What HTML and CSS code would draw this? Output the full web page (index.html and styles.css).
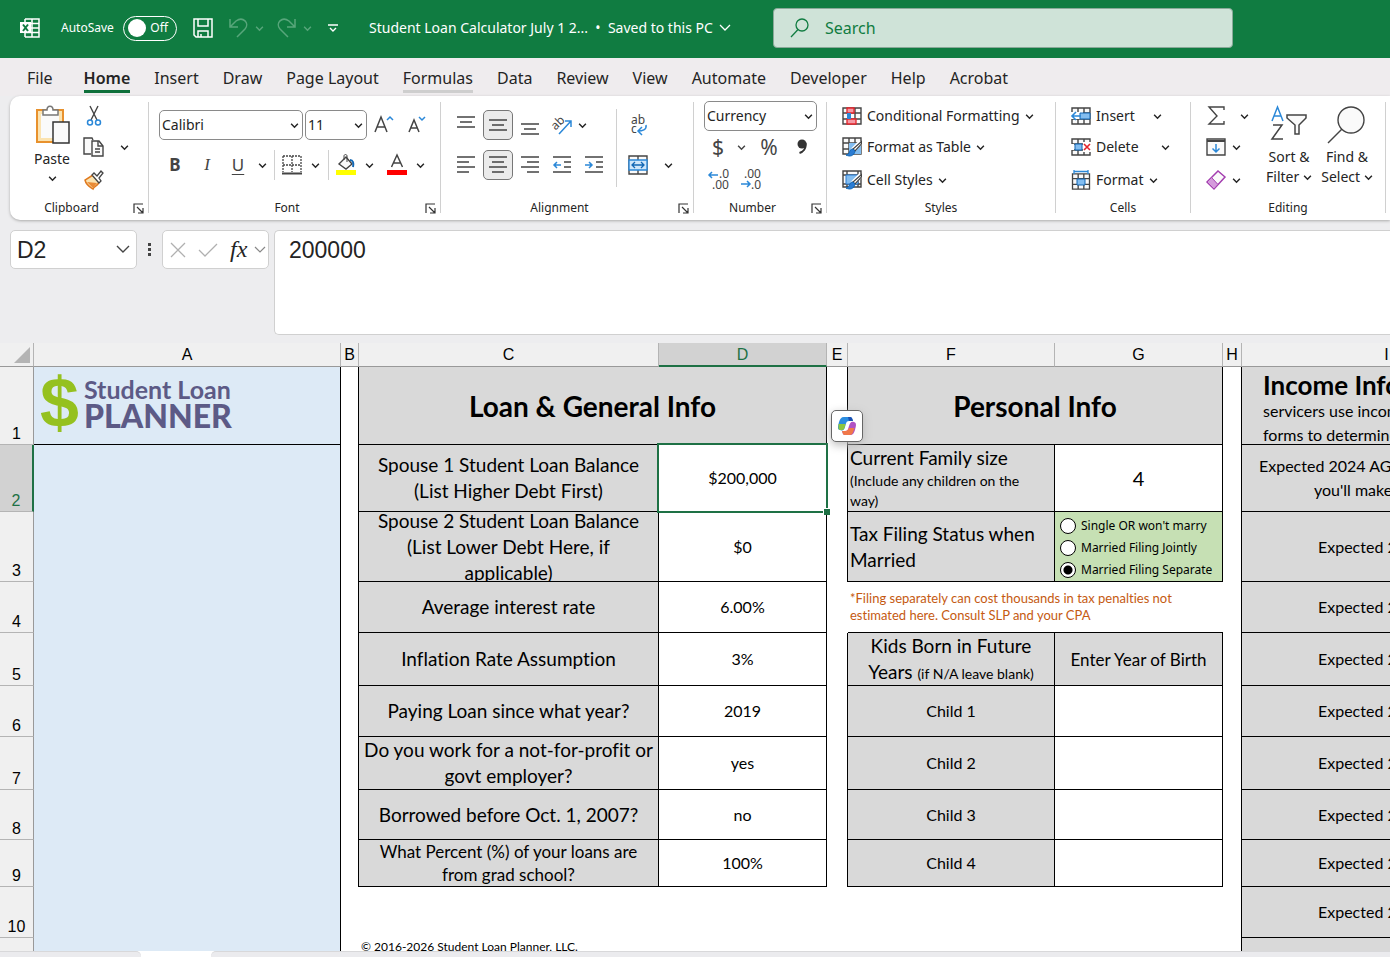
FILE: index.html
```html
<!DOCTYPE html>
<html lang="en">
<head>
<meta charset="utf-8">
<title>Student Loan Calculator - Excel</title>
<link rel="stylesheet" href="styles.css">
</head>
<body>
<svg class="sprite" aria-hidden="true">
  <symbol id="chev" viewBox="0 0 8 8"><path d="M1 2.5l3 3 3-3" fill="none" stroke="currentColor" stroke-width="1.3"/></symbol>
  <symbol id="launch" viewBox="0 0 11 11"><path d="M1 10V1h9M4 4l5.5 5.5M10 5v5H5" fill="none" stroke="#333" stroke-width="1.2"/></symbol>
  <symbol id="table" viewBox="0 0 20 18"><path d="M1 1h18v16H1zM1 6h18M1 12h18M7 1v16M13 1v16" fill="#fafafa" stroke="#444" stroke-width="1.4"/></symbol>
  <symbol id="brush" viewBox="0 0 20 20"><path d="M19 5L10 14" stroke="#fff" stroke-width="5"/><path d="M19.500 4.500L11 12l2 2 6.500-7z" fill="#fff" stroke="#444" stroke-width="1.200"/><path d="M11 12c-3 0-3 2-4 4-1 1.500-2 2-3 2 4 2 8 1 9-4z" fill="#2b7cd3" stroke="#1267b4"/></symbol>
</svg>

<header class="titlebar">
  <svg class="excel" width="20" height="20" viewBox="0 0 20 20"><path d="M5 1h14v18H5M5 5.500h14M5 10h14M5 14.500h14M12 1v18M5 1v18" fill="none" stroke="#fff" stroke-width="1.500"/><path d="M0 4h11v11H0z" fill="#fff"/><path d="M3 6.500l5 6.500M8 6.500L3 13" stroke="#107c41" stroke-width="2"/></svg>
  <label class="autosave">AutoSave <span class="switch"><input type="checkbox" aria-label="AutoSave"><span>Off</span></span></label>
  <button class="save" aria-label="Save"><svg width="20" height="20" viewBox="0 0 20 20" fill="none" stroke="#fff" stroke-width="1.500"><path d="M1 1h18v18H3l-2-2zM5 1v7h10V1M5 19v-6h10v6M8 19v-3"/></svg></button>
  <button class="undo" aria-label="Undo"><svg width="20" height="22" viewBox="0 0 20 22" fill="none" stroke="currentColor" stroke-width="1.500"><path d="M2 2v8h8M2 10L8 4c7-5 14 2 9 8l-8 8"/></svg></button>
  <svg class="faint" width="9" height="9"><use href="#chev"/></svg>
  <button class="redo" aria-label="Redo"><svg width="20" height="22" viewBox="0 0 20 22" fill="none" stroke="currentColor" stroke-width="1.500"><path d="M18 2v8h-8M18 10l-6-6C5-1-2 6 3 12l8 8"/></svg></button>
  <svg class="faint" width="9" height="9"><use href="#chev"/></svg>
  <button class="custom" aria-label="Customize toolbar"><svg width="10" height="9" viewBox="0 0 10 9" fill="none" stroke="#fff" stroke-width="1.400"><path d="M0 1h10M2 4l3 3 3-3"/></svg></button>
  <button class="doc">Student Loan Calculator July 1 2... &nbsp;•&nbsp; Saved to this PC <svg width="12" height="8" viewBox="0 0 12 8"><path d="M1 1l5 5 5-5" fill="none" stroke="#fff" stroke-width="1.300"/></svg></button>
  <label class="search"><svg width="20" height="20" viewBox="0 0 20 20" fill="none" stroke="#107c41" stroke-width="1.300"><circle cx="12" cy="7" r="6"/><path d="M8 11.500L1 19"/></svg><input type="text" placeholder="Search" aria-label="Search"></label>
</header>

<nav class="tabs">
  <button class="file">File</button><button class="current">Home</button><button>Insert</button><button>Draw</button><button>Page Layout</button><button class="hover">Formulas</button><button>Data</button><button>Review</button><button>View</button><button>Automate</button><button>Developer</button><button>Help</button><button>Acrobat</button>
</nav>

<section class="ribbon">
  <div class="group clipboard">
    <div class="body">
      <button class="paste"><svg width="36" height="40" viewBox="0 0 36 40"><path d="M3 5h26v32H3z" fill="#fbe3b0" stroke="#e8912d" stroke-width="2"/><path d="M7 9h18v24H7z" fill="#fafafa"/><path d="M9 10V5h4c0-5 6-5 6 0h5v5z" fill="#fff" stroke="#777" stroke-width="1.500"/><path d="M19 17h16v21H19z" fill="#fafafa" stroke="#333" stroke-width="1.500"/></svg><span>Paste</span><svg width="9" height="9"><use href="#chev"/></svg></button>
      <div class="stack">
        <div class="row"><button aria-label="Cut"><svg width="16" height="20" viewBox="0 0 16 20" fill="none"><path d="M4 0l7 14M12 0L5 14" stroke="#444" stroke-width="1.400"/><circle cx="4" cy="16.500" r="2.500" stroke="#2b88d8" stroke-width="1.500"/><circle cx="12" cy="16.500" r="2.500" stroke="#2b88d8" stroke-width="1.500"/></svg></button></div>
        <div class="row"><button aria-label="Copy"><svg width="22" height="20" viewBox="0 0 22 20" fill="#fafafa" stroke="#444" stroke-width="1.400"><path d="M8 17H1V1h8l1 2"/><path d="M9 4h7l4 5v10H9z"/><path d="M15 4v5h5M12 12h5M12 15h5" fill="none"/></svg></button><svg class="gap14" width="9" height="9"><use href="#chev"/></svg></div>
        <div class="row"><button aria-label="Format Painter"><svg width="20" height="20" viewBox="0 0 20 20"><path d="M9 5L1 10c1 5 5 7 8 9 1-3 5-3 6-7z" fill="#fbe3b0" stroke="#e07a1f" stroke-width="1.500"/><path d="M3 12l10 1-4 5z" fill="#e98a35"/><path d="M8 5l2-2 3 3 4-5 2 2-4 5 2 3-2 2z" fill="#fff" stroke="#444" stroke-width="1.300"/></svg></button></div>
      </div>
    </div>
    <div class="caption"><span>Clipboard</span><button aria-label="Clipboard options"><svg width="11" height="11"><use href="#launch"/></svg></button></div>
  </div>
  <i class="divider"></i>

  <div class="group font">
    <div class="body two">
      <div class="row combos"><span class="combo wide"><select aria-label="Font"><option>Calibri</option></select><svg width="9" height="9"><use href="#chev"/></svg></span><span class="combo narrow"><select aria-label="Font size"><option>11</option></select><svg width="9" height="9"><use href="#chev"/></svg></span>
        <button class="b34" aria-label="Increase font size"><svg width="20" height="20" viewBox="0 0 20 20" fill="none"><path d="M1 17L7 2l6 15M3 12h8" stroke="#444" stroke-width="1.500"/><path d="M13 5l3-3 3 3" stroke="#2b88d8" stroke-width="1.500"/></svg></button>
        <button class="b32" aria-label="Decrease font size"><svg width="20" height="20" viewBox="0 0 20 20" fill="none"><path d="M2 17L7 5l5 12M4 13h6" stroke="#444" stroke-width="1.500"/><path d="M12 2l3 3 3-3" stroke="#2b88d8" stroke-width="1.500"/></svg></button></div>
      <div class="row biu"><button class="b32"><b>B</b></button><button class="b32"><em>I</em></button><button class="b30"><u>U</u></button><svg class="c16" width="9" height="9"><use href="#chev"/></svg><i class="sep"></i>
        <button class="b34" aria-label="Borders"><svg width="20" height="20" viewBox="0 0 20 20" fill="none" stroke="#444"><path d="M1 1h18M1 10h18M1 1v16M10 1v16M19 1v16" stroke-dasharray="2 1" stroke-width="1.300"/><path d="M0 18.500h20" stroke-width="2"/></svg></button><svg class="c12" width="9" height="9"><use href="#chev"/></svg><i class="sep"></i>
        <button class="b34" aria-label="Fill colour"><svg width="20" height="22" viewBox="0 0 20 22"><path d="M3 10l7-7 6 7-6 5z" fill="#fafafa" stroke="#444" stroke-width="1.400"/><path d="M8 6V2c0-2 3-2 3 0v6" fill="none" stroke="#444"/><path d="M14 6c3 0 4 3 3 7" fill="none" stroke="#1267b4" stroke-width="2"/><path d="M0 16h20v5H0z" fill="#ff0"/></svg></button><svg class="c12" width="9" height="9"><use href="#chev"/></svg>
        <button class="b30" aria-label="Font colour"><svg width="20" height="22" viewBox="0 0 20 22"><path d="M4.500 13L10 1l5.500 12M6.500 9h7" fill="none" stroke="#444" stroke-width="1.500"/><path d="M0 16h20v5H0z" fill="red"/></svg></button><svg class="gap4" width="9" height="9"><use href="#chev"/></svg></div>
    </div>
    <div class="caption"><span>Font</span><button aria-label="Font options"><svg width="11" height="11"><use href="#launch"/></svg></button></div>
  </div>
  <i class="divider"></i>

  <div class="group align">
    <div class="body">
      <div class="two">
        <div class="row"><button class="sq" aria-label="Top align"><svg width="18" height="18"><path d="M0 1h18M3 6h12M0 11h18"/></svg></button><button class="sq on" aria-label="Middle align"><svg width="18" height="18"><path d="M0 4h18M3 9h12M0 14h18"/></svg></button><button class="sq" aria-label="Bottom align"><svg width="18" height="18"><path d="M0 8h18M3 13h12M0 18h18"/></svg></button>
          <button class="sq" aria-label="Orientation"><svg class="plain" width="20" height="20" viewBox="0 0 20 20"><text x="2" y="14" transform="rotate(-45 5 13)" class="tiny">ab</text><path d="M7 19L19 6M13 6h6v6" fill="none"/></svg></button><svg width="9" height="9"><use href="#chev"/></svg></div>
        <div class="row"><button class="sq" aria-label="Align left"><svg width="18" height="18"><path d="M0 1h18M0 6h12M0 11h18M0 16h12"/></svg></button><button class="sq on" aria-label="Centre"><svg width="18" height="18"><path d="M0 1h18M3 6h12M0 11h18M3 16h12"/></svg></button><button class="sq" aria-label="Align right"><svg width="18" height="18"><path d="M0 1h18M6 6h12M0 11h18M6 16h12"/></svg></button>
          <button class="sq" aria-label="Decrease indent"><svg width="18" height="18"><path d="M0 1h18M11 6h7M11 11h7M0 16h18"/><path class="blue" d="M8 9H1M4 6L1 9l3 3"/></svg></button><button class="sq" aria-label="Increase indent"><svg width="18" height="18"><path d="M0 1h18M11 6h7M11 11h7M0 16h18"/><path class="blue" d="M0 9h7M4 6l3 3-3 3"/></svg></button></div>
      </div>
      <i class="tallsep"></i>
      <div class="two merge">
        <div class="row"><button aria-label="Wrap text"><svg width="20" height="22" viewBox="0 0 20 22"><text x="3" y="10" class="tiny">ab</text><text x="3" y="19" class="tiny">c</text><path d="M18 11c1 5-4 6-8 6M14 13l-4 4 4 4" fill="none" stroke="#2b88d8" stroke-width="1.500"/></svg></button></div>
        <div class="row"><button aria-label="Merge and centre"><svg width="20" height="20" viewBox="0 0 20 20"><path d="M1 1h18v18H1zM10 1v18" fill="#fafafa" stroke="#444" stroke-width="1.400"/><path d="M1 5h18v10H1z" fill="#cfe6fa" stroke="#2b88d8" stroke-width="1.400"/><path d="M4 10h12M7 7l-3 3 3 3M13 7l3 3-3 3" fill="none" stroke="#1267b4" stroke-width="1.300"/></svg></button><svg class="gap16" width="9" height="9"><use href="#chev"/></svg></div>
      </div>
    </div>
    <div class="caption"><span>Alignment</span><button aria-label="Alignment options"><svg width="11" height="11"><use href="#launch"/></svg></button></div>
  </div>
  <i class="divider"></i>

  <div class="group number">
    <div class="body stack">
      <div class="row"><span class="combo format"><select aria-label="Number format"><option>Currency</option></select><svg width="9" height="9"><use href="#chev"/></svg></span></div>
      <div class="row big"><button class="b30">$</button><svg class="c18" width="9" height="9"><use href="#chev"/></svg><button class="b38">%</button><button class="b28" aria-label="Comma style"><svg width="10" height="16" viewBox="0 0 10 16"><circle cx="5" cy="5" r="4.500" fill="#333"/><path d="M8.500 4c1 6-3 9-6 10" fill="none" stroke="#333" stroke-width="2"/></svg></button></div>
      <div class="row"><button class="b32" aria-label="Increase decimal"><svg width="22" height="22" viewBox="0 0 22 22"><text x="11" y="9" class="digits">.0</text><text x="4" y="20" class="digits">.00</text><path d="M10 6H1M4 3L1 6l3 3" fill="none" stroke="#2b88d8" stroke-width="1.500"/></svg></button><button class="b32" aria-label="Decrease decimal"><svg width="22" height="22" viewBox="0 0 22 22"><text x="4" y="9" class="digits">.00</text><text x="11" y="20" class="digits">.0</text><path d="M1 15h9M7 12l3 3-3 3" fill="none" stroke="#2b88d8" stroke-width="1.500"/></svg></button></div>
    </div>
    <div class="caption"><span>Number</span><button aria-label="Number options"><svg width="11" height="11"><use href="#launch"/></svg></button></div>
  </div>
  <i class="divider"></i>

  <div class="group styles">
    <div class="body stack">
      <button class="row cmd"><svg width="20" height="18" viewBox="0 0 20 18"><use href="#table"/><path d="M5 1h7v5H5zM5 12h9v5H5z" fill="#f49aa5" stroke="#e3242b" stroke-width="1.300"/><path d="M5 6h4v6H5z" fill="#2b88d8"/></svg>Conditional Formatting<svg width="9" height="9"><use href="#chev"/></svg></button>
      <button class="row cmd"><svg width="20" height="20" viewBox="0 0 20 20"><use href="#table" width="20" height="18"/><path d="M7 6h12v11H7z" fill="#83bdf0"/><use href="#brush"/></svg>Format as Table<svg width="9" height="9"><use href="#chev"/></svg></button>
      <button class="row cmd"><svg width="20" height="20" viewBox="0 0 20 20"><path d="M1 1h18v16H1zM1 5h18M5 1v16M1 14h18M16 1v16" fill="#fafafa" stroke="#444" stroke-width="1.400"/><path d="M4 5h12v9H4z" fill="#83bdf0" stroke="#2b7cd3"/><use href="#brush"/></svg>Cell Styles<svg width="9" height="9"><use href="#chev"/></svg></button>
    </div>
    <div class="caption"><span>Styles</span></div>
  </div>
  <i class="divider"></i>

  <div class="group cells">
    <div class="body stack">
      <button class="row cmd"><svg width="20" height="18" viewBox="0 0 20 18"><use href="#table"/><path d="M0 5h12v7H0z" fill="#fff"/><path d="M9 6h10v6H9z" fill="#83bdf0" stroke="#1267b4"/><path d="M10 9H2M5 5L1 9l4 4" fill="none" stroke="#2b88d8" stroke-width="1.600"/></svg><span class="w52">Insert</span><svg width="9" height="9"><use href="#chev"/></svg></button>
      <button class="row cmd"><svg width="20" height="18" viewBox="0 0 20 18"><use href="#table"/><path d="M12 4h8v10h-8zM0 6h3v6H0z" fill="#fff"/><path d="M4 6h7v6H4z" fill="#83bdf0" stroke="#1267b4"/><path d="M13 6l6 6M19 6l-6 6" stroke="#e3242b" stroke-width="1.600"/></svg><span class="w60">Delete</span><svg width="9" height="9"><use href="#chev"/></svg></button>
      <button class="row cmd"><svg width="20" height="20" viewBox="0 0 20 20"><use href="#table" y="3" width="20" height="17"/><path d="M3 0h14v3H3z" fill="#fff"/><path d="M6 9h8v6H6z" fill="#83bdf0" stroke="#1267b4"/><path d="M3 1.500h14M3 0v4M17 0v4" stroke="#2b88d8" stroke-width="1.300"/></svg>Format<svg width="9" height="9"><use href="#chev"/></svg></button>
    </div>
    <div class="caption"><span>Cells</span></div>
  </div>
  <i class="divider"></i>

  <div class="group editing">
    <div class="body">
      <div class="stack tools">
        <div class="row"><button class="b28" aria-label="AutoSum"><svg width="18" height="20" viewBox="0 0 18 20"><path d="M17 4V1H2l8 9-8 8h15v-3" fill="none" stroke="#444" stroke-width="1.400"/></svg></button><svg class="gap10" width="9" height="9"><use href="#chev"/></svg></div>
        <div class="row"><button class="b28" aria-label="Fill"><svg width="20" height="18" viewBox="0 0 20 18"><path d="M1 1h18v16H1z" fill="#fafafa" stroke="#444" stroke-width="1.400"/><path d="M1 3h18" stroke="#444" stroke-width="2"/><path d="M10 6v8M6.500 10.500L10 14l3.500-3.500" fill="none" stroke="#2b88d8" stroke-width="1.500"/></svg></button><svg class="gap2" width="9" height="9"><use href="#chev"/></svg></div>
        <div class="row"><button class="b28" aria-label="Clear"><svg width="20" height="20" viewBox="0 0 20 20"><path d="M1 12L12 1l7 6L8 19z" fill="#fafafa" stroke="#a43fb0" stroke-width="1.500"/><path d="M1 12l4.500-4.500 6.500 7L8 19z" fill="#d59bdc" stroke="#a43fb0"/></svg></button><svg class="gap2" width="9" height="9"><use href="#chev"/></svg></div>
      </div>
      <button class="large"><svg width="38" height="38" viewBox="0 0 38 38" fill="none"><path d="M2 16L7.500 2 13 16M4 11h7" stroke="#2b88d8" stroke-width="1.500"/><path d="M3 20h9L2 34h11" stroke="#444" stroke-width="1.500"/><path d="M17 10h19v3l-7 7v9h-4v-9l-8-7z" fill="#fafafa" stroke="#444" stroke-width="1.500"/></svg><span>Sort &amp;<br>Filter <svg width="9" height="9"><use href="#chev"/></svg></span></button>
      <button class="large"><svg width="38" height="38" viewBox="0 0 38 38" fill="none" stroke="#444" stroke-width="1.400"><circle cx="23" cy="15" r="13" fill="#fafafa"/><path d="M14 24L0 38"/></svg><span>Find &amp;<br>Select <svg width="9" height="9"><use href="#chev"/></svg></span></button>
    </div>
    <div class="caption"><span>Editing</span></div>
  </div>
  <i class="divider"></i>
</section>

<section class="formula">
  <div class="box name"><input type="text" value="D2" aria-label="Name box"><svg width="14" height="9" viewBox="0 0 14 9"><path d="M1 1l6 6 6-6" fill="none" stroke="#444" stroke-width="1.400"/></svg></div>
  <svg class="dots" width="4" height="14"><path d="M0 0h3v3H0zM0 5h3v3H0zM0 10h3v3H0z" fill="#444"/></svg>
  <div class="box fx"><button aria-label="Cancel"><svg width="16" height="16" viewBox="0 0 16 16"><path d="M1 1l14 14M15 1L1 15" stroke="#b0b0b0" stroke-width="1.300"/></svg></button><button class="enter" aria-label="Enter"><svg width="20" height="14" viewBox="0 0 20 14"><path d="M1 7l6 6L19 1" fill="none" stroke="#b0b0b0" stroke-width="1.300"/></svg></button><button class="fn">fx</button><svg width="12" height="8" viewBox="0 0 12 8"><path d="M1 1l5 5 5-5" fill="none" stroke="#888" stroke-width="1.200"/></svg></div>
  <textarea aria-label="Formula bar">200000</textarea>
</section>

<main class="sheet">
<table>
  <colgroup><col class="k0"><col class="ka"><col class="kb"><col class="kc"><col class="kd"><col class="ke"><col class="kf"><col class="kd"><col class="kh"><col class="ki"></colgroup>
  <thead><tr><th class="corner"><svg width="16" height="16"><path d="M16 0v16H0z" fill="#b4b4b4"/></svg></th><th>A</th><th>B</th><th>C</th><th class="sel">D</th><th>E</th><th>F</th><th>G</th><th>H</th><th>I</th></tr></thead>
  <tbody>
  <tr class="r1"><th>1</th><td class="a line"><div class="logo"><span class="dollar">$</span><span class="words"><span>Student Loan</span><strong>PLANNER</strong></span></div></td><td class="v"></td><td colspan="2" class="g title">Loan &amp; General Info</td><td class="v"></td><td colspan="2" class="g title">Personal Info</td><td class="v"></td><td class="g"><div class="clip income"><b>Income Info</b><span>servicers use income</span><span>forms to determine</span></div></td></tr>
  <tr class="r2"><th class="sel">2</th><td class="a"></td><td class="v"></td><td class="g q">Spouse 1 Student Loan Balance<br>(List Higher Debt First)</td><td class="w active">$200,000<button class="copilot" aria-label="Copilot"><svg width="20" height="20" viewBox="0 0 20 20"><path d="M7 1h6c2 0 2 1 3 4h-4c-3 0-3 3-4 6s-2 4-5 3c-3 0-2-4-1-8 1-3 2-5 5-5z" fill="#2b8de0"/><path d="M1.500 8h7l-1 4c-1 3-6 3-6 0z" fill="#8cc63f"/><path d="M13 1c2 0 2 1 3 4h-4l-1-4z" fill="#1b4fb0"/><path d="M13 19H8c-2 0-2-1-3-4h3c3 0 3-2 4-5s2-5 5-4 2 4 1 8c-1 3-2 5-5 5z" fill="#b052c4"/><path d="M17.500 12l-1 3c-1 3-2 4-4 4H8c-2 0-2-1-3-4h3c2 0 3-1 4-3z" fill="#f0784a"/></svg></button></td><td class="v"></td><td class="g left family"><span class="q">Current Family size</span><small>(Include any children on the<br>way)</small></td><td class="w four">4</td><td class="v"></td><td class="g left in18">Expected 2024 AGI<br><span class="in55">you'll make</span></td></tr>
  <tr class="r3"><th>3</th><td class="a"></td><td class="v"></td><td class="g q"><div class="clip middle">Spouse 2 Student Loan Balance<br>(List Lower Debt Here, if<br>applicable)</div></td><td class="w">$0</td><td class="v"></td><td class="g left q">Tax Filing Status when Married</td><td class="green"><label><input type="radio" name="status">Single OR won't marry</label><label><input type="radio" name="status">Married Filing Jointly</label><label><input type="radio" name="status" checked>Married Filing Separate</label></td><td class="v"></td><td class="g left in77">Expected 2025</td></tr>
  <tr class="r4"><th>4</th><td class="a"></td><td class="v"></td><td class="g q">Average interest rate</td><td class="w">6.00%</td><td></td><td colspan="2" class="note">*Filing separately can cost thousands in tax penalties not<br>estimated here. Consult SLP and your CPA</td><td class="v"></td><td class="g left in77">Expected 2026</td></tr>
  <tr class="r5"><th>5</th><td class="a"></td><td class="v"></td><td class="g q">Inflation Rate Assumption</td><td class="w">3%</td><td class="v"></td><td class="g q">Kids Born in Future<br>Years <small>(if N/A leave blank)</small></td><td class="g m">Enter Year of Birth</td><td class="v"></td><td class="g left in77">Expected 2027</td></tr>
  <tr class="r6"><th>6</th><td class="a"></td><td class="v"></td><td class="g q">Paying Loan since what year?</td><td class="w">2019</td><td class="v"></td><td class="g">Child 1</td><td class="w"></td><td class="v"></td><td class="g left in77">Expected 2028</td></tr>
  <tr class="r7"><th>7</th><td class="a"></td><td class="v"></td><td class="g q">Do you work for a not-for-profit or<br>govt employer?</td><td class="w">yes</td><td class="v"></td><td class="g">Child 2</td><td class="w"></td><td class="v"></td><td class="g left in77">Expected 2029</td></tr>
  <tr class="r8"><th>8</th><td class="a"></td><td class="v"></td><td class="g q">Borrowed before Oct. 1, 2007?</td><td class="w">no</td><td class="v"></td><td class="g">Child 3</td><td class="w"></td><td class="v"></td><td class="g left in77">Expected 2030</td></tr>
  <tr class="r9"><th>9</th><td class="a"></td><td class="v"></td><td class="g m">What Percent (%) of your loans are<br>from grad school?</td><td class="w">100%</td><td class="v"></td><td class="g">Child 4</td><td class="w"></td><td class="v"></td><td class="g left in77">Expected 2031</td></tr>
  <tr class="r10"><th>10</th><td class="a"></td><td></td><td></td><td></td><td></td><td></td><td></td><td class="v"></td><td class="g left in77">Expected 2032</td></tr>
  <tr class="r11"><th></th><td class="a"></td><td></td><td colspan="2" class="copy">© 2016-2026 Student Loan Planner, LLC.</td><td></td><td></td><td></td><td class="v"></td><td class="g"></td></tr>
  </tbody>
</table>
</main>
<footer class="sheettabs"><i class="before"></i><i class="after"></i></footer>
</body>
</html>
```
FILE: styles.css
```css
* { box-sizing: border-box; }
body { margin: 0; height: 100vh; display: flex; flex-direction: column; overflow: hidden; background: #ededef; color: #242424; font: 16px/20px "Noto Sans", sans-serif; }
button { background: none; border: 0; padding: 0; margin: 0; font: inherit; color: inherit; display: inline-flex; align-items: center; justify-content: center; }
input, select, textarea { font: inherit; color: inherit; border: 0; margin: 0; padding: 0; background: none; outline: none; }
svg { flex: none; overflow: visible; }
.sprite { position: absolute; width: 0; height: 0; }

.titlebar { flex: none; display: flex; align-items: center; height: 58px; padding: 0 20px 2px; background: #107c41; color: #fff; font-size: 14px; white-space: nowrap; }
.autosave { display: flex; align-items: center; justify-content: space-between; width: 116px; margin-left: 21px; font-size: 12px; }
.switch { display: flex; align-items: center; justify-content: space-between; width: 54px; height: 25px; padding: 0 8px 0 4px; border: 1px solid #fff; border-radius: 13px; }
.switch input { appearance: none; width: 18px; height: 18px; border-radius: 50%; background: #fff; }
.save { margin-left: 16px; }
.undo { margin: 0 7px 0 15px; color: #58a67b; }
.redo { margin: 0 6px 0 13px; color: #58a67b; }
.faint { color: #58a67b; }
.custom { margin-left: 16px; }
.doc { width: 404px; margin-left: 31px; justify-content: flex-start; }
.doc svg { margin-left: 6px; }
.search { display: flex; align-items: center; flex: 0 1 460px; height: 40px; padding: 0 16px; gap: 15px; border: 1px solid #8aa999; border-radius: 4px; background: #cfe3d8; color: #107c41; font-size: 16px; }
.search input { flex: 1; min-width: 0; }
.search input::placeholder { color: #107c41; opacity: 1; }

.tabs { flex: none; display: flex; gap: 24px; height: 38px; padding-left: 27px; background: #efecee; }
.tabs button { height: 35px; padding-top: 7px; border-bottom: 3px solid transparent; white-space: nowrap; }
.tabs .file { margin-right: 7px; }
.tabs .current { font-weight: 600; border-color: #0f703b; }
.tabs .hover { border-color: #cecece; }

.ribbon { flex: none; display: flex; height: 124px; margin-left: 10px; padding-top: 6px; overflow: hidden; background: #fff; border-radius: 10px 0 0 10px; box-shadow: 0 1px 3px #aaa; font-size: 14px; white-space: nowrap; }
.divider { flex: none; width: 1px; height: 111px; background: #d0d0d0; }
.group { flex: none; display: flex; flex-direction: column; }
.body { display: flex; height: 98px; }
.caption { display: flex; height: 16px; line-height: 16px; font-size: 12px; }
.caption span { flex: 1; text-align: center; }
.caption button { margin-right: 4px; }
.row { display: flex; align-items: center; height: 32px; }
.stack { display: flex; flex-direction: column; }
.stack > .row:first-child { height: 28px; }
.stack > .row:nth-child(2) { height: 34px; }
.two { display: flex; flex-direction: column; padding-top: 3px; }
.two .row { height: 40px; }
.b28 { width: 28px; } .b30 { width: 30px; } .b32 { width: 32px; } .b34 { width: 34px; } .b38 { width: 38px; }
.c12 { margin: 0 8px 0 2px; } .c16 { margin: 0 7px 0 5px; } .c18 { margin: 0 4px; }
.gap2 { margin-left: 2px; } .gap4 { margin-left: 4px; } .gap10 { margin-left: 10px; } .gap14 { margin-left: 14px; } .gap16 { margin-left: 16px; }
.clipboard { width: 138px; }
.paste { flex-direction: column; justify-content: flex-start; width: 36px; margin: 3px 12px 0 24px; }
.paste span { margin: 4px 0 5px; }
.paste + .stack .row > button { width: 24px; }
.font { width: 291px; }
.combos, .biu { padding-left: 10px; }
.combo { display: flex; align-items: center; height: 30px; padding: 0 3px 0 2px; border: 1px solid #8a8a8a; border-radius: 5px; font-size: 14px; }
.combo select { appearance: none; flex: 1; min-width: 0; }
.wide { width: 144px; margin-right: 2px; } .narrow { width: 62px; } .format { width: 113px; margin-left: 10px; }
.biu .b32, .biu .b30 { font-size: 17px; color: #444; }
.biu em { font-family: "Liberation Serif", serif; }
.biu u { text-underline-offset: 3px; }
.sep { width: 1px; height: 30px; background: #d0d0d0; }
.align { width: 252px; }
.align .two:first-child { margin-left: 9px; }
.sq { width: 30px; height: 30px; margin: 0 1px; border: 1px solid transparent; border-radius: 5px; }
.sq.on { background: #ebebeb; border-color: #777; }
.sq svg path { fill: none; stroke: #444; stroke-width: 1.5px; }
.sq svg .blue, .sq .plain path { stroke: #2b88d8; }
.tiny, .digits { font: 12px "Noto Sans", sans-serif; fill: #444; }
.tallsep { width: 1px; height: 78px; margin: 7px 11px 0 6px; background: #d0d0d0; }
.number { width: 132px; }
.big { font-size: 21px; color: #444; }
.number .row:not(:first-child) { padding-left: 9px; }
.styles { width: 228px; }
.cmd { gap: 5px; margin-left: 15px; justify-content: flex-start; }
.cells { width: 134px; }
.w52 { width: 52px; text-align: left; } .w60 { width: 60px; text-align: left; }
.editing { width: 194px; }
.tools { width: 58px; margin-left: 11px; }
.large { flex-direction: column; justify-content: flex-start; width: 58px; padding-top: 3px; }
.large span { margin-top: 4px; }

.formula { flex: none; display: flex; align-items: flex-start; padding: 10px 0 8px 10px; }
.box { display: flex; align-items: center; height: 39px; background: #fff; border: 1px solid #d0d0d0; border-radius: 5px; font: 23px/28px "Liberation Sans", sans-serif; }
.name { width: 127px; padding: 0 6px; }
.name input { flex: 1; min-width: 0; }
.dots { margin: 13px 10px 0 11px; }
.fx { width: 107px; padding: 0 2px 0 7px; }
.enter { margin: 0 12px; }
.fn { flex: 1; justify-content: flex-start; font: italic 24px "Liberation Serif", serif; }
.formula textarea { flex: 1; height: 105px; margin-left: 5px; padding: 5px 14px; resize: none; background: #fff; border: 1px solid #d0d0d0; border-right: 0; border-radius: 5px 0 0 5px; font: 23px/28px "Liberation Sans", sans-serif; }

.sheet { flex: 1; min-height: 0; overflow: hidden; background: #fff; color: #000; font: 16px/24px Lato, sans-serif; font-variant-ligatures: none; }
table { table-layout: fixed; width: 1532px; border-spacing: 0; }
.k0 { width: 34px; } .ka { width: 307px; } .kb { width: 18px; } .kc { width: 300px; } .kd { width: 168px; } .ke { width: 21px; } .kf { width: 207px; } .kh { width: 19px; } .ki { width: 290px; }
th { padding: 0; background: #f0f0f0; border-right: 1px solid #b4b4b4; border-bottom: 1px solid #999; font: 16px/20px "Liberation Sans", sans-serif; }
thead th { height: 24px; }
.corner { text-align: right; padding-right: 3px; line-height: 0; }
tbody th { vertical-align: bottom; border-right-color: #999; border-bottom-color: #b4b4b4; }
th.sel { background: #d2d2d2; color: #1e7145; }
thead .sel { border-bottom: 2px solid #1e7145; line-height: 19px; }
tbody .sel { border-right: 2px solid #1e7145; }
td { padding: 0 2px; text-align: center; vertical-align: middle; }
.a { background: #ddeaf6; border-right: 1px solid #000; }
.line { border-bottom: 1px solid #000; vertical-align: top; }
.v { border-right: 1px solid #000; padding: 0; }
.g { background: #d9d9d9; border-right: 1px solid #000; border-bottom: 1px solid #000; }
.w { border-right: 1px solid #000; border-bottom: 1px solid #000; }
.q { font-size: 19px; line-height: 26px; }
.m { font-size: 17px; line-height: 23px; }
.title { font-size: 28px; font-weight: 700; }
.left { text-align: left; }
small { font-size: 14px; line-height: 20px; }
.family > * { display: block; }
.r1 { height: 78px; } .r2 { height: 67px; } .r3 { height: 70px; } .r4, .r6, .r10 { height: 51px; } .r5, .r7 { height: 53px; } .r8 { height: 50px; } .r9 { height: 47px; } .r11 { height: 51px; }
.clip { overflow: hidden; height: 69px; }
.clip.middle { display: flex; align-items: center; justify-content: center; }
.income { display: flex; flex-direction: column; height: 77px; padding: 4px 0 0 19px; text-align: left; }
.income b { font-size: 26px; line-height: 28px; }
.income span { flex: none; line-height: 24px; }
.in18 { padding-left: 17px; }
.in55 { padding-left: 55px; }
.in77 { padding-left: 76px; }
.four { font-size: 20px; }
.active { position: relative; }
.active::before { content: ""; position: absolute; inset: -2px; border: 2px solid #1e7145; }
.active::after { content: ""; position: absolute; right: -4px; bottom: -4px; width: 6px; height: 6px; background: #1e7145; border: 1px solid #fff; border-width: 1px 0 0 1px; }
.copilot { position: absolute; left: 172px; top: -35px; z-index: 1; width: 32px; height: 32px; background: #fff; border: 1px solid #666; border-radius: 5px; box-shadow: 0 3px 10px #bbb; }
.green { background: #c6e0b4; border-right: 1px solid #000; border-bottom: 1px solid #000; font: 12px/22px "Noto Sans", sans-serif; text-align: left; padding: 3px 0 0 5px; }
.green label { display: flex; align-items: center; gap: 5px; white-space: nowrap; }
.green input { appearance: none; width: 16px; height: 16px; border: 1px solid #000; border-radius: 50%; background: #fff; }
.green input:checked { background: radial-gradient(circle, #000 4px, #fff 5px); }
.note { color: #c55a11; border-bottom: 1px solid #000; font-size: 13px; line-height: 17px; text-align: left; }
.copy { vertical-align: top; text-align: left; font-size: 12px; line-height: 18px; }
.logo { display: flex; align-items: center; gap: 5px; height: 72px; padding-left: 4px; color: #5c5a86; text-align: left; }
.dollar { color: #95c11f; font: bold 70px/70px "Liberation Sans", sans-serif; }
.words { display: flex; flex-direction: column; font-size: 25px; line-height: 26px; font-weight: 700; }
.words strong { font-size: 32px; line-height: 28px; font-weight: 900; }

.sheettabs { flex: none; display: flex; justify-content: space-between; height: 6px; background: #fff; }
.sheettabs i { background: #ebebee; border-top: 1px solid #d8d8da; }
.before { width: 141px; border-radius: 0 5px 0 0; }
.after { flex: 1; margin-left: 70px; border-radius: 5px 0 0 0; }
```
